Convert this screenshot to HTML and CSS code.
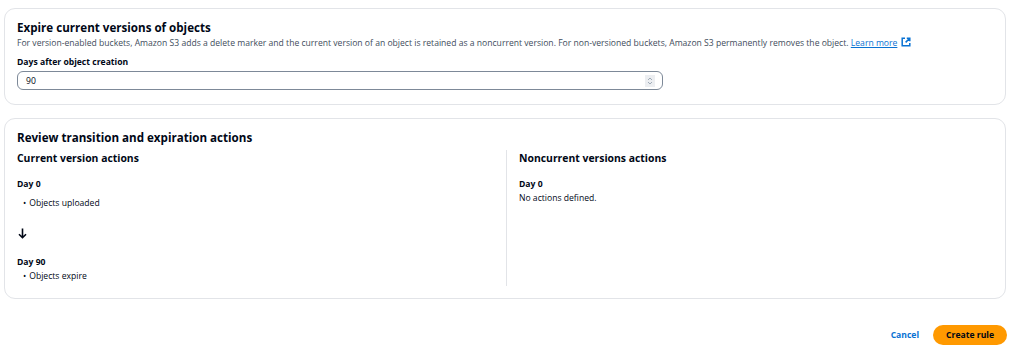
FILE: index.html
```html
<!DOCTYPE html>
<html lang="en">
<head>
    <meta charset="UTF-8">
    <title>Lifecycle rule</title>
    <link rel="stylesheet" href="styles.css">
</head>
<body>
    <div class="page">
        <div class="card first">
            <h2 class="card-title">Expire current versions of objects</h2>
            <p class="desc">For version-enabled buckets, Amazon S3 adds a delete marker and the current version of an object is retained as a noncurrent version. For non-versioned buckets, Amazon S3 permanently removes the object. <a href="#" class="link">Learn more</a>
                <svg class="ext" width="10" height="10" viewBox="0 0 10 10"><path d="M4 1.2H1.2v7.6h7.6V6" fill="none" stroke="#0972d3" stroke-width="1.5"/><path d="M5.8 1.2h3v3M8.8 1.2L4.6 5.4" fill="none" stroke="#0972d3" stroke-width="1.5"/></svg>
            </p>
            <label class="field-label">Days after object creation</label>
            <div class="input">
                <span>90</span>
                <span class="spinner">
                    <svg width="6" height="8" viewBox="0 0 6 8"><path d="M1 3l2-2 2 2M1 5l2 2 2-2" fill="none" stroke="#8d99a8" stroke-width="0.8"/></svg>
                </span>
            </div>
        </div>

        <div class="card review">
            <h2 class="card-title">Review transition and expiration actions</h2>
            <div class="columns">
                <div class="col">
                    <h3 class="col-title">Current version actions</h3>
                    <div class="day">Day 0</div>
                    <ul class="actions">
                        <li>Objects uploaded</li>
                    </ul>
                    <div class="arrow">
                        <svg width="9" height="11" viewBox="0 0 9 11"><path d="M4.5 0.5v9M1 6.2l3.5 3.5L8 6.2" fill="none" stroke="#000716" stroke-width="1.6"/></svg>
                    </div>
                    <div class="day">Day 90</div>
                    <ul class="actions tight">
                        <li>Objects expire</li>
                    </ul>
                </div>
                <div class="col right">
                    <h3 class="col-title">Noncurrent versions actions</h3>
                    <div class="day">Day 0</div>
                    <p class="none">No actions defined.</p>
                </div>
            </div>
        </div>

        <div class="footer">
            <a href="#" class="cancel">Cancel</a>
            <button class="primary">Create rule</button>
        </div>
    </div>
</body>
</html>
```

FILE: styles.css
```css
body {
    margin: 0;
    background-color: white;
    font-family: "Open Sans", "Noto Sans", sans-serif;
    color: #000716;
}
.page {
    padding: 8px 14px 0 4px;
}
.card {
    border: 1px solid #e2e4e8;
    border-radius: 11px;
    padding: 10px 12px 13px 12px;
    margin-bottom: 14px;
}
.card.first {
    padding-bottom: 14px;
    margin-bottom: 13px;
}
.card-title {
    font-size: 11.6px;
    font-weight: bold;
    margin: 0;
    line-height: 18px;
}
.desc {
    font-size: 8.6px;
    color: #414d5c;
    margin: 0 0 6px 0;
    line-height: 13px;
}
.link {
    color: #0972d3;
    text-decoration: underline;
}
.ext {
    vertical-align: -1px;
    margin-left: 1px;
}
.field-label {
    display: block;
    font-size: 8.6px;
    font-weight: bold;
    line-height: 13px;
    margin-bottom: 2px;
}
.input {
    width: 629px;
    height: 17px;
    border: 1px solid #7d8998;
    border-radius: 6px;
    display: flex;
    align-items: center;
    justify-content: space-between;
    padding: 0 7px 0 8px;
    font-size: 8.6px;
}
.spinner {
    width: 10px;
    height: 12px;
    background-color: #eceef1;
    display: flex;
    align-items: center;
    justify-content: center;
}
.review {
    padding-top: 10px;
    padding-bottom: 12px;
}
.columns {
    display: grid;
    grid-template-columns: 489px 1fr;
    margin-top: 3px;
}
.col {
    padding-bottom: 3px;
}
.col.right {
    border-left: 1px solid #e2e4e8;
    padding-left: 12px;
}
.col-title {
    font-size: 10.4px;
    font-weight: bold;
    margin: 0 0 12px 0;
    line-height: 16px;
}
.day {
    font-size: 8.6px;
    font-weight: bold;
    line-height: 13px;
}
.actions {
    list-style: none;
    margin: 6px 0 0 0;
    padding: 0;
    font-size: 8.6px;
    line-height: 13px;
}
.actions li::before {
    content: "•";
    margin: 0 3px 0 6px;
}
.actions.tight {
    margin-top: 1px;
}
.arrow {
    margin: 12px 0 22px 1px;
    height: 12px;
}
.none {
    font-size: 8.6px;
    margin: 1px 0 0 0;
    line-height: 13px;
}
.footer {
    display: flex;
    justify-content: flex-end;
    align-items: center;
    gap: 14px;
    margin-top: 26px;
    margin-right: -1px;
}
.cancel {
    color: #0972d3;
    font-size: 8.6px;
    font-weight: bold;
    text-decoration: none;
}
.primary {
    background-color: #ff9900;
    color: #000716;
    border: none;
    border-radius: 14px;
    font-family: inherit;
    font-size: 8.6px;
    font-weight: bold;
    height: 20px;
    padding: 0 13px;
}
```
